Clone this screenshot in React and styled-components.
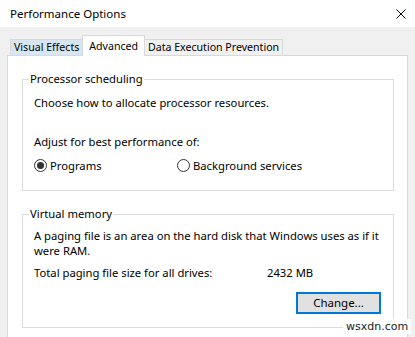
import React from "react";
import styled, { createGlobalStyle } from "styled-components";

const Global = createGlobalStyle`
  html, body { margin: 0; padding: 0; }
  body {
    width: 415px;
    height: 337px;
    overflow: hidden;
    background: #f0f0f0;
    font-family: "Noto Sans", "Open Sans", sans-serif;
    font-size: 11.25px;
    color: #000;
  }
  * { box-sizing: border-box; }
`;

const Window = styled.div`
  position: relative;
  width: 415px;
  height: 337px;
  overflow: hidden;
  background: #f0f0f0;
`;

const TitleBar = styled.div`
  height: 27px;
  background: #fff;
  display: flex;
  align-items: center;
  justify-content: space-between;
  padding: 0 9px 0 10px;
`;

const Title = styled.span`
  font-size: 11.5px;
  line-height: 16px;
`;

const Close = styled.svg`
  width: 10px;
  height: 10px;
`;

const Body = styled.div`
  padding: 0 7px;
`;

const TabStrip = styled.div`
  height: 29px;
  display: flex;
  align-items: flex-end;
  padding-left: 3px;
  margin-bottom: -1px;
`;

const Tab = styled.div`
  position: relative;
  display: flex;
  align-items: center;
  justify-content: center;
  height: ${(p) => (p.$active ? "21px" : "17px")};
  padding: 0 ${(p) => (p.$active ? "6px" : "3px")};
  margin-left: -1px;
  border: 1px solid #d9d9d9;
  border-bottom: ${(p) => (p.$active ? "none" : "1px solid #d9d9d9")};
  background: ${(p) => (p.$active ? "#fff" : p.$hover ? "#d8e6f2" : "#f0f0f0")};
  z-index: ${(p) => (p.$active ? 1 : 0)};
  font-size: 10.6px;
  line-height: 15px;
  white-space: nowrap;
  &:first-child { margin-left: 0; }
`;

const Panel = styled.div`
  background: #fff;
  border: 1px solid #d9d9d9;
  padding: 15px 13px 40px 14px;
`;

const Group = styled.fieldset`
  margin: 0 0 ${(p) => p.$gap || 0}px 0;
  border: 1px solid #dcdcdc;
  padding: ${(p) => p.$pt}px 12px ${(p) => p.$pb}px 11px;
  min-width: 0;
`;

const Legend = styled.legend`
  padding: 0 1px;
  margin-left: -5px;
  line-height: 16px;
`;

const Text = styled.div`
  line-height: 15px;
  white-space: nowrap;
  margin-top: ${(p) => p.$mt || 0}px;
`;

const RadioRow = styled.div`
  display: grid;
  grid-template-columns: 143px auto;
  margin-top: 9px;
  line-height: 15px;
`;

const RadioLabel = styled.label`
  display: flex;
  align-items: center;
  gap: 3px;
  white-space: nowrap;
`;

const RadioCircle = styled.span`
  position: relative;
  width: 13px;
  height: 13px;
  border: 1px solid #333;
  border-radius: 50%;
  background: #fff;
  flex: none;
  &::after {
    content: "";
    display: ${(p) => (p.$checked ? "block" : "none")};
    position: absolute;
    left: 2px;
    top: 2px;
    width: 7px;
    height: 7px;
    border-radius: 50%;
    background: #333;
  }
`;

const InfoRow = styled.div`
  display: grid;
  grid-template-columns: 233px auto;
  line-height: 15px;
  margin-top: 7px;
  white-space: nowrap;
`;

const ButtonRow = styled.div`
  display: flex;
  justify-content: flex-end;
  margin-top: 12px;
`;

const Button = styled.button`
  width: 85px;
  height: 22px;
  border: 2px solid #0078d7;
  background: #e1e1e1;
  font-family: inherit;
  font-size: 11.5px;
  color: #000;
  padding: 0;
  line-height: 16px;
`;

const Watermark = styled.div`
  position: absolute;
  left: 343px;
  top: 319px;
  padding: 0 3px;
  background: #fff;
  font-family: "DejaVu Sans", sans-serif;
  font-size: 11px;
  line-height: 15px;
  color: #222;
`;

export default function App() {
  return (
    <Window>
      <Global />
      <TitleBar>
        <Title>Performance Options</Title>
        <Close viewBox="0 0 10 10">
          <path d="M0.5 0.5 L9.5 9.5 M9.5 0.5 L0.5 9.5" stroke="#000" strokeWidth="1" fill="none" />
        </Close>
      </TitleBar>
      <Body>
        <TabStrip>
          <Tab $hover>Visual Effects</Tab>
          <Tab $active>Advanced</Tab>
          <Tab>Data Execution Prevention</Tab>
        </TabStrip>
        <Panel>
          <Group $pt={8} $pb={17} $gap={15}>
            <Legend>Processor scheduling</Legend>
            <Text>Choose how to allocate processor resources.</Text>
            <Text $mt={24}>Adjust for best performance of:</Text>
            <RadioRow>
              <RadioLabel>
                <RadioCircle $checked />
                Programs
              </RadioLabel>
              <RadioLabel>
                <RadioCircle />
                Background services
              </RadioLabel>
            </RadioRow>
          </Group>
          <Group $pt={6} $pb={13}>
            <Legend>Virtual memory</Legend>
            <Text>A paging file is an area on the hard disk that Windows uses as if it</Text>
            <Text>were RAM.</Text>
            <InfoRow>
              <span>Total paging file size for all drives:</span>
              <span>2432 MB</span>
            </InfoRow>
            <ButtonRow>
              <Button>Change...</Button>
            </ButtonRow>
          </Group>
        </Panel>
      </Body>
      <Watermark>wsxdn.com</Watermark>
    </Window>
  );
}
